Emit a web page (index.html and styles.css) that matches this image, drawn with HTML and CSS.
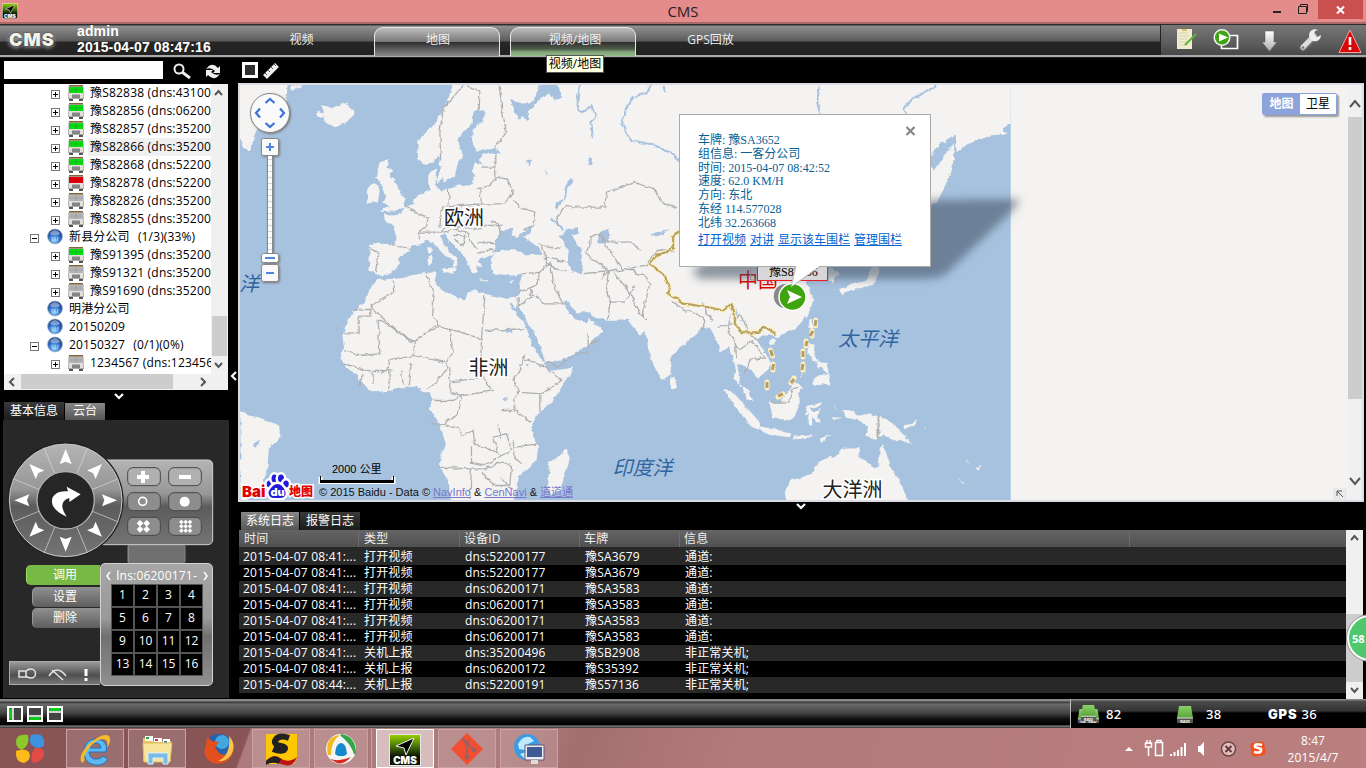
FILE: index.html
```html
<!DOCTYPE html>
<html lang="zh-CN">
<head>
<meta charset="utf-8">
<title>CMS</title>
<link rel="stylesheet" href="styles.css">
</head>
<body>
<svg class="defs" width="0" height="0" aria-hidden="true">
  <defs>
    <linearGradient id="metal" x1="0" y1="0" x2="0" y2="1"><stop offset="0" stop-color="#b4b4b4"/><stop offset=".4" stop-color="#979797"/><stop offset=".55" stop-color="#5c5c5c"/><stop offset="1" stop-color="#747474"/></linearGradient>
    <linearGradient id="silver" x1="0" y1="0" x2="0" y2="1"><stop offset="0" stop-color="#fff"/><stop offset="1" stop-color="#aaa"/></linearGradient>
    <linearGradient id="cmsg" x1="0" y1="0" x2="0" y2="1"><stop offset="0" stop-color="#9bd000"/><stop offset=".35" stop-color="#4a7d0a"/><stop offset=".7" stop-color="#0c1403"/></linearGradient>
    <linearGradient id="grn" x1="0" y1="0" x2="0" y2="1"><stop offset="0" stop-color="#8bd06a"/><stop offset="1" stop-color="#5aa53a"/></linearGradient>
    <radialGradient id="ball" cx=".45" cy=".75" r=".75"><stop offset="0" stop-color="#8fd4ff"/><stop offset=".5" stop-color="#2f6fc8"/><stop offset="1" stop-color="#12357c"/></radialGradient>
  </defs>
  <symbol id="bus" viewBox="0 0 16 16">
    <rect x="1" y="0" width="14" height="2" fill="#84603f"/><rect x="0" y="1.500" width="16" height="8" fill="#ccc"/>
    <rect x="1" y="2" width="14" height="6" fill="currentColor"/><path d="M0 8h16v6H0z" fill="#e2e1dc"/><path d="M0 8h1v5H0zM15 8h1v5h-1z" fill="#b8b8b8"/>
    <rect x="4" y="9.500" width="8" height="4" fill="#858585"/><rect x="0" y="13" width="16" height="1" fill="#aaa"/><path d="M1 14h4v2H1zM11 14h4v2h-4z" fill="#555"/>
    <path d="M8 2v6M1 5h14" stroke="#000" stroke-opacity=".1"/>
  </symbol>
  <symbol id="globe" viewBox="0 0 16 16">
    <circle cx="8" cy="8" r="7.500" fill="url(#ball)" stroke="#aeb7c4" stroke-width=".7"/>
    <path d="M5 8q0 3 1 5M11 8q0 3-1 5M8 8v5" stroke="#d8efff" stroke-opacity=".6" fill="none"/>
    <path d="M3 4.500q5-6 10 0-1 3-5 2-4 1-5-2z" fill="#fff" fill-opacity=".4"/>
  </symbol>
  <symbol id="cms" viewBox="0 0 32 32">
    <rect x=".5" y=".5" width="31" height="31" fill="url(#cmsg)" stroke="#e8e8e8"/><path d="M25 4 7 12l8 2 2 7z" fill="#000" stroke="#eee" stroke-width="1"/>
    <text x="16" y="30" text-anchor="middle" font-family="Inter" font-weight="900" font-size="10" fill="#fff">CMS</text>
  </symbol>
  <symbol id="disk" viewBox="0 0 18 19">
    <path d="M3 1h12l2 12H1z" fill="url(#grn)"/><rect x="1" y="13" width="16" height="5" fill="#555"/><path d="M1 13h16" stroke="#ddd"/><text x="9" y="17.500" text-anchor="middle" font-size="4" font-family="Inter" font-weight="700" fill="#fff">RAID</text>
  </symbol>
</svg>

<header class="titlebar">
  <svg class="app-icon" width="16" height="16"><use href="#cms"/></svg>
  <span class="title">CMS</span>
  <div class="winbtns">
    <svg width="50" height="20"><path d="M5 12h8" stroke="#222" stroke-width="2"/><path d="M30.500 6.500h8v7h-8zM32.500 6V4.500h7v7H38" fill="none" stroke="#222"/></svg>
    <span class="close"><svg width="10" height="10"><path d="M1 1.500 8 8.500M8 1.500 1 8.500" stroke="#fff" stroke-width="2"/></svg></span>
  </div>
</header>

<nav class="header">
  <div class="logo">CMS</div>
  <div class="user"><div>admin</div><div>2015-04-07 08:47:16</div></div>
  <div class="tabs"><span class="tab">视频</span><span class="tab on">地图</span><span class="tab on hover">视频/地图<em>视频/地图</em></span><span class="tab">GPS回放</span></div>
  <div class="tools">
    <svg width="205" height="32">
      <path d="M16 4h15v20H16z" fill="#f0ecd2"/><path d="M18 8h9M18 11h10M18 14h8M18 17h9M18 20h7" stroke="#d9d2a8"/><path d="M21 5h5" stroke="#d9aa4a" stroke-width="1.500"/><path d="m24 20 11-11" stroke="#59b82f" stroke-width="2"/>
      <path d="M60.500 10.500h16v13h-16z" fill="none" stroke="#fff" stroke-width="1.700"/><circle cx="61" cy="12.500" r="8.500" fill="#f3f3f3"/><circle cx="61" cy="12.500" r="7" fill="#42a317"/><path d="m58 8.500 9 4-9 4z" fill="#fff"/>
      <path d="M104 6h9v11h3l-7.500 9.500-7.500-9.500h3z" fill="url(#silver)" stroke="#555" stroke-width=".5"/>
      <path d="m142 23 11-11" stroke="#777" stroke-width="6.500" stroke-linecap="round"/><path d="m142 22 11-11" stroke="#ddd" stroke-width="5" stroke-linecap="round"/><path d="M157 5a6 6 0 1 0 3 5l-4 2-3-2 1-4z" fill="#eee"/><circle cx="142" cy="22.500" r="1.300" fill="#777"/>
      <path d="M189 5 200 27.500h-22z" fill="#d80808" stroke="#f4a3a3"/><path d="M189 12v8M189 22v3" stroke="#fff" stroke-width="2.600"/>
    </svg>
  </div>
</nav>

<main class="work">
  <aside class="side">
    <div class="search"><input class="field" aria-label="search">
      <svg width="60" height="22"><circle cx="10" cy="8" r="4.500" fill="none" stroke="#eee" stroke-width="2"/><path d="m13 11 8 6" stroke="#eee" stroke-width="3"/><path d="M37 8q6-8 12-1l2-2v7h-7l2-2q-4-4-9-2zM51 13q-6 8-12 1l-2 2v-7h7l-2 2q4 4 9 2z" fill="#eee"/></svg>
    </div>
    <div class="tree">
      <div class="tree-main">
        <ul class="rows">
          <li class="car g"><i></i><svg><use href="#bus"/></svg><span>豫S82838 (dns:43100</span></li>
          <li class="car g"><i></i><svg><use href="#bus"/></svg><span>豫S82856 (dns:06200</span></li>
          <li class="car g"><i></i><svg><use href="#bus"/></svg><span>豫S82857 (dns:35200</span></li>
          <li class="car g sel"><i></i><svg><use href="#bus"/></svg><span>豫S82866 (dns:35200</span></li>
          <li class="car g"><i></i><svg><use href="#bus"/></svg><span>豫S82868 (dns:52200</span></li>
          <li class="car r"><i></i><svg><use href="#bus"/></svg><span>豫S82878 (dns:52200</span></li>
          <li class="car"><i></i><svg><use href="#bus"/></svg><span>豫S82826 (dns:35200</span></li>
          <li class="car"><i></i><svg><use href="#bus"/></svg><span>豫S82855 (dns:35200</span></li>
          <li class="grp"><i class="open"></i><svg><use href="#globe"/></svg><span>新县分公司&nbsp; (1/3)(33%)</span></li>
          <li class="car g"><i></i><svg><use href="#bus"/></svg><span>豫S91395 (dns:35200</span></li>
          <li class="car"><i></i><svg><use href="#bus"/></svg><span>豫S91321 (dns:35200</span></li>
          <li class="car"><i></i><svg><use href="#bus"/></svg><span>豫S91690 (dns:35200</span></li>
          <li class="grp leaf"><i></i><svg><use href="#globe"/></svg><span>明港分公司</span></li>
          <li class="grp leaf"><i></i><svg><use href="#globe"/></svg><span>20150209</span></li>
          <li class="grp"><i class="open"></i><svg><use href="#globe"/></svg><span>20150327&nbsp; (0/1)(0%)</span></li>
          <li class="car"><i></i><svg><use href="#bus"/></svg><span>1234567 (dns:123456</span></li>
        </ul>
        <div class="vbar tree-v"><svg width="16" height="18"><path d="m4 11 3.500-4 3.500 4" class="arr"/></svg><b></b><svg width="16" height="18"><path d="m4 7 3.500 4 3.500-4" class="arr"/></svg></div>
      </div>
      <div class="hbar"><svg width="17" height="16"><path d="m10 4-4 4 4 4" class="arr"/></svg><b></b><svg width="50" height="16"><path d="m28 4 4 4-4 4" class="arr"/></svg></div>
    </div>
    <div class="fold side-fold"><svg width="12" height="12"><path d="m2 4 4 4 4-4" class="chev"/></svg></div>
    <div class="subtabs"><span class="on dark">基本信息</span><span class="lit">云台</span></div>
    <section class="ptz">
      <svg class="wheel" width="226" height="143" viewBox="9 60 678 429">
        <path d="M384 434h170v55H384z" fill="#707070"/><path d="M384 437v50M555 437v50" stroke="#bbb" stroke-width="2"/>
        <rect x="200" y="180" width="438" height="254" rx="14" fill="url(#metal)" stroke="#cfcfcf" stroke-width="3"/>
        <circle cx="197" cy="301" r="174" fill="#222"/><circle cx="197" cy="301" r="169" fill="url(#metal)" stroke="#c8c8c8" stroke-width="3"/>
        <g stroke="#ddd" stroke-width="2"><path d="m41 237 312 128M353 237 41 365M133 457l129-312M262 457 133 145"/></g>
        <circle cx="197" cy="301" r="86" fill="#262626" stroke="#b0b0b0" stroke-width="4"/>
        <g fill="#fff"><g id="ar"><path d="m197 147 18 45-18-7-18 7z"/></g><use href="#ar" transform="rotate(45 197 301)"/><use href="#ar" transform="rotate(90 197 301)"/><use href="#ar" transform="rotate(135 197 301)"/><use href="#ar" transform="rotate(180 197 301)"/><use href="#ar" transform="rotate(225 197 301)"/><use href="#ar" transform="rotate(270 197 301)"/><use href="#ar" transform="rotate(315 197 301)"/>
        <path d="M200 260l42 23-34 23v-12q-38 12-8 56-54-24-42-58 12-22 46-18z"/></g>
        <g fill="#8d8d8d" stroke="#484848" stroke-width="3"><g fill="#b0b0b0"><rect x="383" y="203" width="98" height="54" rx="16"/><rect x="506" y="203" width="98" height="54" rx="16"/></g><rect x="383" y="278" width="98" height="54" rx="16"/><rect x="506" y="278" width="98" height="54" rx="16"/><rect x="383" y="352" width="98" height="54" rx="16"/><rect x="506" y="352" width="98" height="54" rx="16"/></g>
        <g fill="none" stroke="#fff" stroke-width="12"><path d="M411 231h36M429 213v36M537 231h36"/></g><circle cx="428" cy="304" r="12" fill="none" stroke="#fff" stroke-width="5"/><circle cx="554" cy="305" r="15" fill="#fff"/>
        <g fill="#fff"><path d="M420 360l10 10-10 10-10-10zM440 360l10 10-10 10-10-10zM420 378l10 10-10 10-10-10zM440 378l10 10-10 10-10-10z"/>
        <path d="M544 360l6 6-6 6-6-6zM557 360l6 6-6 6-6-6zM570 360l6 6-6 6-6-6zM544 373l6 6-6 6-6-6zM557 373l6 6-6 6-6-6zM570 373l6 6-6 6-6-6zM544 386l6 6-6 6-6-6zM557 386l6 6-6 6-6-6zM570 386l6 6-6 6-6-6z" stroke="#fff" stroke-width="1.500"/></g>
      </svg>
      <div class="ptz-low">
        <div class="acts"><span class="act go">调用</span><span class="act">设置</span><span class="act">删除</span>
          <div class="aux"><svg width="90" height="24"><path d="M9 9h7v6H9zM16 9q2-2 5-2a4.500 4.500 0 1 1 0 9q-3 0-5-2M39 14q8-12 17 0M42 8l11 10" fill="none" stroke="#e4e4e4" stroke-width="1.500"/><path d="M76 7v7M76 16v3" stroke="#fff" stroke-width="3"/></svg></div></div>
        <div class="dev"><div class="dev-h"><svg width="5" height="10"><path d="M4 1 1 5l3 4" class="chev thin"/></svg><span>dns:06200171-</span><svg width="5" height="10"><path d="m1 1 3 4-3 4" class="chev thin"/></svg></div>
          <div class="keys"><b>1</b><b>2</b><b>3</b><b>4</b><b>5</b><b>6</b><b>7</b><b>8</b><b>9</b><b>10</b><b>11</b><b>12</b><b>13</b><b>14</b><b>15</b><b>16</b></div></div>
      </div>
    </section>
  </aside>
  <div class="split"><svg width="8" height="12"><path d="M6 2 2 6l4 4" class="chev"/></svg></div>

  <section class="content">
    <div class="maptools"><svg width="45" height="24"><path d="M5.500 5.500h13v13h-13z" fill="#2e2e2e" stroke="#fff" stroke-width="3"/><path d="m27 19 12-12" stroke="#eee" stroke-width="5.500"/><path d="m27 15 2 2M30 12l2 2M33 9l2 2M36 6l2 2" stroke="#555"/></svg></div>
    <div class="mapbox">
      <div class="map">
        <svg class="world" width="1108" height="415" viewBox="240 85 1108 415">
          <defs>
            <filter id="rough" x="0" y="0" width="100%" height="100%"><feTurbulence type="fractalNoise" baseFrequency=".16" numOctaves="3" seed="4"/><feDisplacementMap in="SourceGraphic" scale="4.500" xChannelSelector="R" yChannelSelector="G"/></filter>
            <filter id="soft" x="-10%" y="-30%" width="120%" height="160%"><feGaussianBlur stdDeviation="4"/></filter>
            <clipPath id="tile"><rect x="240" y="85" width="770.700" height="415"/></clipPath>
          </defs>
          <rect x="240" y="85" width="1108" height="415" fill="#f4f3f1"/>
          <g clip-path="url(#tile)"><rect x="240" y="85" width="771" height="415" fill="#a7c2df"/>
          <g filter="url(#rough)"><g transform="translate(236.500 80.500) scale(.33333)">
            <g fill="#f4f3f1">
              <path d="M660 -30L650 15 625 80 600 120 575 150 542 180 545 235 562 255 590 245 607 225 612 260 622 303 655 290 662 255 680 225 665 185 675 160 705 130 708 95 725 85 748 95 735 125 708 150 706 190 720 210 775 205 795 215 740 222 730 232 735 255 715 245 708 270 715 285 708 305 690 315 672 313 640 325 610 330 598 315 597 290 600 263 575 275 575 310 583 330 552 340 530 355 535 370 505 380 495 395 470 405 442 402 445 425 465 430 478 460 475 492 410 488 397 495 400 530 395 572 430 585 440 587 470 575 490 550 488 535 520 508 525 495 550 492 570 480 590 490 620 520 650 540 655 562 662 552 662 535 640 515 620 490 612 465 622 458 645 490 680 520 695 550 708 575 725 575 715 555 735 560 725 540 755 528 780 515 760 535 765 565 770 580 830 585 855 580 852 610 848 640 840 650 810 655 745 640 715 630 693 635 685 660 630 635 605 620 595 600 600 575 560 578 490 590 440 598 430 590 400 625 385 665 350 695 330 725 318 765 322 800 312 832 318 845 335 865 360 880 380 915 412 935 465 930 500 920 540 918 560 935 580 935 588 955 580 985 600 1015 612 1040 628 1090 612 1130 610 1160 635 1200 650 1290 820 1290 845 1215 845 1190 900 1140 905 1100 890 1070 885 1035 905 1000 950 960 1000 880 1010 862 935 872 925 850 885 790 870 740 840 690 822 668 836 688 845 675 870 720 900 770 928 845 975 840 1020 815 1060 790 1097 750 1070 725 1060 710 1050 725 1020 720 1000 700 980 665 990 660 1020 695 1060 695 1075 712 1115 718 1177 718 1185 735 1212 765 1227 750 1232 790 1242 835 1267 885 1279 898 1302 882 1305 825 1332 800 1382 760 1392 745 1422 745 1437 770 1452 815 1477 800 1487 825 1497 860 1492 895 1517 920 1532 955 1547 965 1537 935 1512 910 1507 885 1502 850 1532 860 1557 885 1567 892 1597 865 1604 845 1587 815 1562 785 1572 765 1602 765 1622 770 1682 740 1717 700 1730 660 1712 610 1692 560 1700 500 2060 420 2082 380 2107 355 2137 290 2152 235 2154 190 2122 225 2092 270 2072 240 2112 190 2150 165 2172 160 2167 180 2222 180 2262 165 2317 160 2297 150 2292 115 2340 105 2340 -30z"/>
              <path d="M2160 215q60-50 157-80l10-10-10-25 30 0-30-40-160 80z"/>
              <path d="M0 -10h155L150 60 120 80 65 95 62 150 40 215 20 200 0 160zM163 15l35 0-20 10-18 4z"/>
              <path d="M243 90l20 8-8-25 30 10 20-5 20-12 25 20 0 20-25 22-28 12-28-14-8-15-18-5z"/>
              <path d="M430 245l25-8-5 25 20 5-12 25 15 5 12 30 20 30-5 25-20 10-50 2 28-18-20-10 8-18-15-45-15-10z"/>
              <path d="M390 325l25-18 15 15-5 40-35 8 5-20-8-10z"/>
              <path d="M620 262l-2 30-12 15-8-10zM575 500l10 0 2 16-9 4zM573 530l14-8 2 25-14 6zM615 565l45-5-8 20-35-8zM728 596l28 4-2 3-24-3zM815 603l22-6-8 8z"/>
              <path d="M12 990l25 15 30 5 60 25 5 35-35 35-5 70-20 50-60 50z"/>
              <path d="M990 1105l10 30-15 50-15 45-25 10-15-20 10-50-5-25 35-20z"/>
              <path d="M1302 890l12 0 8 30-15 10z"/><path d="M1458 925l30 8 35 40 45 50 0 25-25-10-35-45z"/>
              <path d="M1564 1040l60 8 38 12-5 10-70-10zM1672 1065l60 0-30 12-30-4zM1750 1075l35-15-30 25z"/>
              <path d="M1600 965l30 0 25-30 20-30 25 15-15 15 5 30-15 45-25 10-40-10-8-25z"/>
              <path d="M1712 975l45-7-5 8-30 6 10 15 25-12-18 22 15 15-15 0-12-12 0 25-10-5-2-30-8 5z"/>
              <path d="M1595 780l20-5 2 12-15 10zM1722 715l8 10-5 30-13-15z"/><path d="M1717 790l17 2-2 30 15 15-15 5-20-25zM1735 840l35 10 10 35-15-10-10-15-10 5zM1730 895l30-15 20 5-3 30-30-5-15 5zM1690 890l20-22-18 24z"/>
              <path d="M1820 988l30 3 15 15 35-8 60 22 30 30 35 40-40-10-45-15-25 10-30-10 10-20-25-25-40-8z"/><path d="M1995 1035l35-5 10-15-5 20-30 8zM1785 1010l35 2-30 5zM1792 965l3 25-3-8zM2065 1035l8 12-6-5zM2190 1135l8 15-8-8zM2160 1190l25 20-8-4zM2215 1163l25-10-20 15z"/>
              <path d="M1650 1290l-5-60 20-30 60-20 15-30 40-25 15 5 20-25 55-2-5 25 50 35 10-5 5-55 10-12 25 75 25 35 20 50 32 50 10 30z"/>
              <path d="M1815 645l-5-18 35-17 40-5 10-20 15-35 20 20-10 25-10 18-35 10-20 0-20 8zM1780 560l27 20-20 30-15-25z"/>
            </g>
            <g fill="#a7c2df"><path d="M770 515L775 490 790 450 830 445 825 465 845 470 875 445 895 430 880 460 860 468 905 500 915 520 870 525 825 505 790 512z"/><path d="M970 470l25-25 30-5 5 20-25 5 30 40 2 75-30-5-15-30 5-35z"/><path d="M1085 465l35-20-10 20 5 20-28 5z"/><path d="M820 55l45 15 30-10 10-45 60-5 10 40-22 10-20-25-25 25-20 20-15 15 5 25-20-10-10 10-12-25-15-40z"/><path d="M955 390l3-25 25-10 0-35 10-20 20 0-20 20-5 30-25 30zM865 240l20-5-5 20zM928 260l6 22-6 0zM1060 225l8 12-5 15-10-4zM1240 465l60-20-20 15-30 10zM1092 455l25-10 0 30-25 5zM50 1090l25-15-12 18-10 8zM805 750l18-10 5 15-15 5zM800 955l10-10 0 20zM868 856l8-4-2 10zM1495 680l10 20-5 5zM1510 720l18 2-4 8z"/></g>
            <g fill="none" stroke="#a7c2df" stroke-width="6"><path d="M1030 15l-10 60 15 20 30-20 15 35-15 15 3 45M1240 -10l0 40-60 30-25 60 25 60 60 10 70 30 25 30M1750 15l-8 50 18 70M2080 -10l15 30-70 35-25 30 20 40M1280 20l10 15M945 410l35 40M822 668l35 50" /></g>
            <g fill="none" stroke="#b0afaf" stroke-width="3.800">
              <path d="M680 15l-60 70-10 70 2 60 0 25M690 15l40 20-2 50M788 15l10 80 12 60-35 45M635 325l4 50M730 330l5 40 70 0 25-35-20-40-30-5-20 25-35 10zM735 370l-120 10-5 60M830 360l20 20 45 15-5 40-30 15M505 380l40 20 30 10-5 30-20 10-2 30M470 492l50 12M400 505l25 10-8 60M552 455l60 0 20-20 90 10 25-10 50 0M620 455l30-10 40 10 15 30 15 20M650 465l35 0-5 30-30-20M725 485l50 5M720 515l50-8M765 420l20 10 8 35M775 220l0 80M735 260l40 0"/>
              <path d="M400 680L525 785 605 735 640 745 735 775 745 645M570 578l8 30 15 25-5 75 20 30M745 750l120-5M735 775l-2 70M400 677l75-45-5-32M355 687h45v20h-35v50h-45M435 720l-10 0 5 100-65 5-40-15M435 720l100 65-5 40-70 15-10 30-15 10M640 745l10 70-20 30M530 825l95 20 10 15-35 45-30 20M525 845l-10 70M460 870l0 55M495 870l5 45M640 860l0 75 40 10 95-15M640 905l100-15 30 45M865 825l-20 50-15 25 20 35M865 835l60 25 50 40-60 40-75-5M850 935l-15 15 0 40-40 0M835 990l50 35M590 960l60 0 25-15-10 55-50 35-35-10M625 1035l40 5 10 25 35-15 5 45 30 5 40 20-15-50 40-10 15 50-30 15-50 30-40-10 0-45M785 1035l10 40M610 1160l90 5 45 0 50-20 30 10-5 60-50 0-30-40M705 1165l-5 90M840 1100l60-10M830 1080l5 50 20 20M795 1195l40 40M910 1000l0-60M320 850l40 10 40 15M380 880l-15 40M465 870l-60 0 5 40"/>
              <path d="M855 580l55-5-10 40-55 20M910 575l30-30M940 545l15 80 25 45-55 0-45-40M845 650l0 25 40-25-10-30M915 500l20 50 30 20 30 5M905 490l45 15 25-5M925 530l60 15M1045 515l15-15 0-30 25-10 30 25 70 0 25 25M1040 580l75-10 75 0M1045 515l70 55-5 60 10 40-5 45M1115 665l50 0 30-50M965 440l-5-30 30-35 25 5 90 0 5-45 90-30M930 840l35 20 50-40 40 0 0-60M1060 790l30-10M1192 305l60 20 30 45 40 10M1092 455l10 30 55 80 70-10 40-50 50 10M1092 595l30-30 50 60 40 80 20 10M1175 555l30 30 15-5 20 30-25 100M1305 660l40 30 40 10M1385 700l20 20-10 30M1400 665l10 35 20 20M1445 740l45-10 20-30M1490 770l10 30 15 5 30-25 40 50-45 10-15 40M1605 965l50 0 15-40 15-5M1480 700l-5 50 20 30 5 50M1510 700l30 60 25 20"/>
              <path d="M1926 1007v65" stroke-width="6"/>
            </g>
            <path d="M1330 455l-20 10 0 40-50 20-20 25 40 30 20 40-5 20 50 30 70 10 45 10 25-20 10 35 0 25 20 25 50 0 20-15 35 20" fill="none" stroke="#fff0bd" stroke-width="12"/><path d="M1330 455l-20 10 0 40-50 20-20 25 40 30 20 40-5 20 50 30 70 10 45 10 25-20 10 35 0 25 20 25 50 0 20-15 35 20" fill="none" stroke="#b4a062" stroke-width="6"/>
          </g></g>
          <path d="M815.500 320v6M812 331v5M806 341v5M803 351v6M803 364v6M794 378l-3 5M783 394l-5 3M770.500 350l2 6M773 364v6M767 382v6" stroke="#ffeec0" stroke-width="5" stroke-linecap="round"/><path d="M816 320l-1 6M813 331l-3 5M807 341l-1 5M803 351v6M803 364l-1 6M794 379l-3 4M783 394l-5 2M770.500 350l2 6M773.500 364l-1 6M767 382v6" stroke="#b4a062" stroke-width="3"/>
          </g>
          <g class="land"><text x="444" y="225">欧洲</text><text x="468.500" y="375">非洲</text><text x="822.500" y="496.500">大洋洲</text></g>
          <g class="sea"><text x="239" y="290.500">洋</text><text x="838" y="346">太平洋</text><text x="612.500" y="475">印度洋</text></g>
          <text x="738" y="288" class="nation">中国</text>
          <path d="M692 272 730 240 930 200 1018 199Q1020 204 1010 213L948 272Q942 279 920 279H700z" fill="#3c4e60" fill-opacity=".56" filter="url(#soft)"/>
          <g><path d="M750.500 262v18h70" fill="none" stroke="#888"/><path d="M757.500 260.500h70v20h-70z" fill="#d7d7d9" stroke="#ed1c24"/><text x="769" y="276" class="plate">豫S82336</text></g>
          <circle cx="786" cy="296" r="13" fill="#888" stroke="#f3f3f3" stroke-width="1.500"/><circle cx="792.500" cy="297" r="13.500" fill="#3fa50e" stroke="#fff" stroke-width="1.500"/><path d="m787 290 15 7-15 7 3-7z" fill="#fff"/>
          <path d="M320.500 477v5h73v-5" fill="none" stroke="#fff" stroke-width="4"/><path d="M320.500 476v7M393.500 476v7" stroke="#000"/><path d="M320 481.500h74" stroke="#000" stroke-width="3"/><text x="332" y="473" class="scale">2000 公里</text>
          <g class="baidu"><text x="242" y="496.500" class="bai">Bai</text><g fill="#2319dc" stroke="#fff" stroke-width="5" paint-order="stroke"><ellipse cx="269.500" cy="484" rx="2.800" ry="3.500"/><ellipse cx="274.500" cy="478.500" rx="3" ry="4"/><ellipse cx="281" cy="478.500" rx="3" ry="4"/><ellipse cx="286" cy="484" rx="2.800" ry="3.500"/><path d="M277.500 484q5 0 8 8 1 6-6 6h-5q-6 0-6-6 4-8 9-8z"/></g><text x="270.500" y="495.500" class="du">du</text><text x="289" y="496" class="ditu">地图</text></g>
        </svg>
        <div class="copyright">© 2015 Baidu - Data © <a>NavInfo</a> &amp; <a>CenNavi</a> &amp; <a>道道通</a></div>
        <svg class="nav" width="44" height="194"><g filter="drop-shadow(1px 1px 1px #777)"><circle cx="22" cy="22" r="19.500" fill="#fafafa" stroke="#8a8a8a"/><path d="m17.500 12 4.500-4 4.500 4M17.500 32l4.500 4 4.500-4M12 17.500 8 22l4 4.500M32 17.500l4 4.500-4 4.500" fill="none" stroke="#3d72d7" stroke-width="2.200"/><path d="M19.500 64.500h5v104h-5z" fill="#fff" stroke="#888"/><rect x="13.500" y="47.500" width="17" height="17" rx="2" fill="#fafafa" stroke="#888"/><rect x="13.500" y="162.500" width="17" height="9" rx="2" fill="#fff" stroke="#888"/><rect x="13.500" y="173.500" width="17" height="17" rx="2" fill="#fafafa" stroke="#888"/></g><path d="M22 68v94" stroke="#d5d5d5" stroke-width="4" stroke-dasharray="1 5"/><path d="M18 56h8M22 52v8M17 167h10M18 182h8" stroke="#4e86dd" stroke-width="2"/></svg>
        <div class="maptype"><b>地图</b><span>卫星</span></div>
        <article class="info"><svg class="x" width="12" height="12"><path d="m1.500 2 8 8M9.500 2l-8 8" stroke="#858585" stroke-width="2.200"/></svg>
          <p>车牌: 豫SA3652</p><p>组信息: 一客分公司</p><p>时间: 2015-04-07 08:42:52</p><p>速度: 62.0 KM/H</p><p>方向: 东北</p><p>东经 114.577028</p><p>北纬 32.263668</p>
          <div class="links"><a>打开视频</a> <a>对讲</a> <a>显示该车围栏</a> <a>管理围栏</a></div>
          <svg class="tail" width="32" height="24"><path d="M6 0 1 22 31 0z" fill="#fff"/><path d="M6 1 1 22 31 1" fill="none" stroke="#aaa" stroke-width=".8"/></svg>
        </article>
        <svg class="corner" width="14" height="12"><rect width="14" height="12" fill="#e9e9e9"/><path d="M4 8V3h5M4 3l6 6" fill="none" stroke="#555"/></svg>
      </div>
      <div class="vbar map-v"><svg width="14" height="32"><path d="m2 22 5-6 5 6" class="arr"/></svg><b></b><svg width="14" height="32"><path d="m2 10 5 6 5-6" class="arr"/></svg></div>
    </div>
    <div class="fold log"><svg width="12" height="10"><path d="m2 2 4 4 4-4" class="chev"/></svg></div>
    <div class="subtabs logs"><span class="lit">系统日志</span><span class="dark">报警日志</span></div>
    <div class="table">
      <div class="grid">
        <div class="tr th"><span>时间</span><span>类型</span><span>设备ID</span><span>车牌</span><span>信息</span><span></span></div>
        <div class="tr first"><span>2015-04-07 08:41:...</span><span>打开视频</span><span>dns:52200177</span><span>豫SA3679</span><span>通道:</span></div>
        <div class="tr"><span>2015-04-07 08:41:...</span><span>打开视频</span><span>dns:52200177</span><span>豫SA3679</span><span>通道:</span></div>
        <div class="tr"><span>2015-04-07 08:41:...</span><span>打开视频</span><span>dns:06200171</span><span>豫SA3583</span><span>通道:</span></div>
        <div class="tr"><span>2015-04-07 08:41:...</span><span>打开视频</span><span>dns:06200171</span><span>豫SA3583</span><span>通道:</span></div>
        <div class="tr"><span>2015-04-07 08:41:...</span><span>打开视频</span><span>dns:06200171</span><span>豫SA3583</span><span>通道:</span></div>
        <div class="tr"><span>2015-04-07 08:41:...</span><span>打开视频</span><span>dns:06200171</span><span>豫SA3583</span><span>通道:</span></div>
        <div class="tr"><span>2015-04-07 08:41:...</span><span>关机上报</span><span>dns:35200496</span><span>豫SB2908</span><span>非正常关机;</span></div>
        <div class="tr"><span>2015-04-07 08:41:...</span><span>关机上报</span><span>dns:06200172</span><span>豫S35392</span><span>非正常关机;</span></div>
        <div class="tr"><span>2015-04-07 08:44:...</span><span>关机上报</span><span>dns:52200191</span><span>豫S57136</span><span>非正常关机;</span></div>
      </div>
      <div class="vbar log-v"><svg width="17" height="17"><path d="m5 10 3.500-4 3.500 4" class="arr"/></svg><b></b><svg width="17" height="17"><path d="m5 6 3.500 4 3.500-4" class="arr"/></svg></div>
    </div>
  </section>
  <div class="badge">58</div>
</main>

<footer class="status">
  <svg width="64" height="20"><g fill="#444" stroke="#fff" stroke-width="2"><path d="M8 3h14v14H8zM28 3h14v14H28zM48 3h14v14H48z"/></g><path d="M13 3v14M28 12h14M48 8h14" stroke="#fff" stroke-width="1.500"/><path d="M10.500 4.500v11M29.500 14.500h11M49.500 5.500h11" stroke="#0bcc1a" stroke-width="3"/></svg>
  <div class="counts"><svg width="24" height="20"><use href="#disk" x="0" y="4" width="15" height="16"/><use href="#disk" x="8" y="4" width="15" height="16"/><use href="#disk" x="3" y="0" width="17" height="18"/></svg><span class="c1">82</span><svg width="20" height="20"><use href="#disk" x="0" y="1" width="18" height="19"/></svg><span class="c2">38</span><b>GPS</b><span>36</span></div>
</footer>

<footer class="taskbar">
  <span class="start"><svg width="34" height="34"><path d="M15 4Q3 2 3 11q0 6 6 8 8-5 6-15z" fill="#8cc929"/><path d="M18 4q-3 8 2 11 5 4 11 0Q33 0 18 4z" fill="#3d91df"/><path d="M3 20q-1 11 8 12 8-3 5-11-4-4-13-1z" fill="#ffbb18"/><path d="M22 17q10-1 9 7-3 8-11 8-4-7 2-15z" fill="#e34b46"/></svg></span>
  <span class="tb"><svg width="34" height="34"><path d="M28 20H11q1 8 8 7 4 0 6-3l5 3q-4 7-13 6Q5 31 6 18 8 7 18 7q13 1 10 13zM12 16h11q-1-5-5-5t-6 5" fill="#5db9f4" stroke="#1e74be"/><path d="M4 31Q-1 24 11 12 25 0 31 4q3 4-2 12 1-6-1-8Q22 4 12 15 4 25 7 28z" fill="#f8bb28"/></svg></span>
  <span class="tb"><svg width="34" height="34"><path d="M3 6h9l2 3h17v20H3z" fill="#e9c66a"/><path d="M5 4h8v5H5zM14 6h8v4h-8zM23 7h7v4h-7z" fill="#fff"/><path d="M6 5h3v2H6z" fill="#2aa84a"/><path d="M15 7h3v2h-3z" fill="#d33"/><path d="M24 9h3v2h-3z" fill="#38b"/><path d="M3 11h29l-2 19H4z" fill="#f9e49c" stroke="#dfbc5c"/><path d="M8 32V21h20v11h-5v-6h-10v6z" fill="#79bae7" stroke="#d5f2ff"/></svg></span>
  <span class="tb plain"><svg width="34" height="34"><circle cx="17" cy="17" r="14" fill="#2861b0"/><circle cx="20" cy="11" r="7" fill="#43a8df"/><path d="M5 6l5 4 7 1-4 5 4 6q8 5 11-5l-1-10q8 8 3 17-6 11-19 8Q-1 27 4 13z" fill="#e4501b"/><path d="M27 5q8 9 2 19-5 7-13 6 13-5 11-25z" fill="#fbc54b"/></svg></span>
  <span class="tb"><svg width="34" height="34"><path d="M2 2h31v24l-3 6H2z" fill="#fdc803"/><path d="M25 6Q14 2 11 9q-1 4 6 5 6 1 3 4-4 2-11-1" fill="none" stroke="#222" stroke-width="6"/><path d="M2 29q8-8 14-3 8 6 17-1-4 12-16 7Q8 27 2 33z" fill="#c01313"/><path d="M2 29q8-8 15-2l-2 5Q8 29 2 33z" fill="#222"/></svg></span>
  <span class="tb stack"><svg width="34" height="34"><circle cx="17" cy="17" r="15" fill="#f4f4f4"/><path d="M4 23Q0 5 16 3q-9 6-9 20z" fill="#f2bb19"/><path d="M17 3q14 2 14 19-4-12-14-19z" stroke="#35a747" fill="#35a747" stroke-width="2"/><path d="M6 27q10 3 21-2-7 8-14 6z" fill="#d9281c"/><path d="M11 22q1-11 6-11t6 11l-3 2h-6z" fill="#1689ce"/></svg></span>
  <span class="tb active"><svg width="32" height="32"><use href="#cms"/></svg></span>
  <span class="tb"><svg width="34" height="34"><path d="m17 1 16 16-16 16L1 17z" fill="#f14e32"/><path d="m12 6 5 5v15M17 11l7 7" stroke="#9f6060" stroke-width="2" fill="none"/><g fill="#9f6060"><circle cx="17" cy="11" r="2.500"/><circle cx="24" cy="18" r="2.500"/><circle cx="17" cy="25" r="2.500"/></g></svg></span>
  <span class="tb"><svg width="34" height="34"><circle cx="15" cy="15" r="13" fill="#3c9be0"/><path d="M6 12q5-9 12-7l4 4-6 3-3 6-6-1zM8 22l6-2 2 6-3 1z" fill="#bceaff"/><path d="M13 13h19v15H13z" fill="#e9eef5" stroke="#657"/><path d="M15 15h15v10H15z" fill="#405b93"/><path d="M19 28h7v4h-7z" fill="#ddd"/></svg></span>
  <div class="tray"><svg width="150" height="34"><path d="m2 19 4-4 4 4z" fill="#fff"/><g stroke="#fff" fill="none"><path d="M32.500 10.500h7v13h-7zM34 10V8.500h4V10" stroke-width="1.500"/><path d="M22.500 11h6v4h-6zM24 8v4M27 8v4M25.500 15v9" stroke-width="1.500"/></g><path d="M48 24v-2M51.500 24v-4M55 24v-6M58.500 24v-9M62 24V11" stroke="#fff" stroke-width="2"/><path d="M75 14h2l4-4v14l-4-4h-2z" fill="#fff"/><circle cx="105.500" cy="17" r="7" fill="#e5bcbc" stroke="#6b4747" stroke-width="1.500"/><path d="m102.500 14 6 6M108.500 14l-6 6" stroke="#5d3939" stroke-width="2"/><rect x="128" y="10" width="14" height="14" rx="3" transform="rotate(-9 135 17)" fill="#f4511e"/><path d="M139 13q-8-2-7 2l6 2q1 5-7 3" stroke="#fff" stroke-width="2.500" fill="none"/></svg>
  <div class="clock"><div>8:47</div><div>2015/4/7</div></div></div>
</footer>
</body>
</html>
```
FILE: styles.css
```css
* { box-sizing: border-box; }
body { margin: 0; width: 1366px; height: 768px; overflow: hidden; background: #000; color: #fff; font: 12px/16px "Open Sans", "Noto Sans CJK SC", sans-serif; display: flex; flex-direction: column; }
svg { display: block; flex: none; }
.defs { position: absolute; }
.arr { fill: none; stroke: #555; stroke-width: 2; }
.chev { fill: none; stroke: #fff; stroke-width: 2.200; }
.chev.thin { stroke-width: 1.500; }

.titlebar { height: 24px; flex: none; display: grid; grid-template-columns: 120px 1fr 120px; background: #e48b8b; border-bottom: 2px solid #a96a6a; color: #2b2020; }
.app-icon { margin: 3px 0 0 2px; }
.title { text-align: center; font-size: 15px; line-height: 23px; }
.winbtns { display: flex; justify-content: flex-end; margin-right: 3px; }
.close { width: 45px; height: 19px; background: #c9504f; display: flex; align-items: center; justify-content: center; }

.header { height: 34px; flex: none; display: flex; background: linear-gradient(#2c2c2c 0 1px, #909090 2px, #5a5a5a 17px, #262626 18px, #222 31px, #aaa 31px, #aaa 33px, #222 33px); }
.logo { width: 77px; padding-left: 9px; font: 900 18px/31px Inter, sans-serif; letter-spacing: 1px; text-shadow: 0 0 3px #000, 0 1px 4px #fff; color: #f2f2e8; }
.user { width: 160px; font: bold 14px/16px "Liberation Sans", sans-serif; letter-spacing: .12px; margin-top: -1px; white-space: nowrap; }
.tabs { display: flex; gap: 10px; padding-top: 3px; flex: 1; }
.tab { width: 127px; height: 28px; text-align: center; line-height: 26px; color: #eee; padding-left: 2px; }
.tab.on { width: 126px; height: 29px; border: 1px solid #e5e5e5; border-bottom: 0; border-radius: 9px 9px 0 0; line-height: 24px; background: linear-gradient(#bdbdbd, #777 14px, #2d2d2d 14px, #8a8a8a); }
.tab.hover { background: linear-gradient(#bdbdbd, #777 14px, #2d2d2d 14px, #4c5c4a 21px, #82a57b 24px, #92bd88); display: flex; flex-direction: column; align-items: center; padding-left: 4px; }
.tab em { position: relative; z-index: 5; flex: none; font-style: normal; line-height: 16px; margin-top: 3px; padding: 0 2px; height: 18px; background: #ffffe1; color: #000; border: 1px solid #555; white-space: nowrap; }
.tools { width: 206px; height: 30px; margin-top: 1px; background: linear-gradient(#777, #606060 16px, #484848); border-left: 1px solid #222; }

.work { height: 641px; flex: none; display: flex; position: relative; overflow: hidden; }
.side { width: 230px; display: flex; flex-direction: column; }
.search { height: 26px; padding: 3px 0 0 4px; display: flex; gap: 6px; }
.field { width: 159px; height: 18px; border: 0; background: #fff; padding: 0; }
.tree { width: 224px; height: 306px; margin-left: 4px; background: #fff; color: #000; flex: none; }
.tree-main { display: flex; height: 290px; }
.rows { list-style: none; margin: 0; padding: 0; width: 207px; overflow: hidden; }
.rows li { display: flex; height: 18px; line-height: 17px; white-space: nowrap; }
.rows svg { width: 16px; height: 16px; margin: 1px 6px 0 8px; color: #b5b5b5; }
.rows i { flex: none; width: 9px; height: 9px; margin: 6px 0 0 47px; border: 1px solid #777; background: linear-gradient(#000, #000) center/5px 1px no-repeat, linear-gradient(#000, #000) center/1px 5px no-repeat; }
.rows i.open { background: linear-gradient(#000, #000) center/5px 1px no-repeat; }
.rows .grp i { margin-left: 26px; }
.rows .grp svg { height: 17px; margin-top: 0; }
.rows .grp span { letter-spacing: .15px; word-spacing: .8px; }
.rows .leaf i { visibility: hidden; }
.rows .g svg { color: #09db16; }
.rows .r svg { color: #e1000a; }
.rows .car span { width: 121px; letter-spacing: .2px; }
.rows .sel span { background: #f0f0f0; box-shadow: -2px 0 #f0f0f0; }
.vbar { background: #f0f0f0; display: flex; flex-direction: column; }
.vbar b { background: #cdcdcd; }
.tree-v { width: 17px; }
.tree-v b { height: 40px; width: 15px; margin-top: auto; margin-left: 1px; }
.hbar { display: flex; height: 16px; background: #f0f0f0; }
.hbar b { width: 152px; height: 15px; background: #cdcdcd; }
.fold { height: 12px; display: flex; justify-content: center; }
.side-fold { padding-left: 8px; }
.subtabs { display: flex; gap: 1px; height: 18px; margin-left: 4px; line-height: 17px; }
.subtabs .on { width: 60px; }
.lit { background: linear-gradient(#888, #555); }
.dark { background: linear-gradient(#3a3a3a, #1b1b1b); }
.side .subtabs span { text-align: center; }
.side .lit { width: 40px; height: 17px; margin-top: 1px; line-height: 15px; }
.ptz { margin-left: 3px; width: 226px; height: 278px; background: #282828; }
.ptz-low { display: flex; }
.acts { width: 97px; padding-top: 2px; display: flex; flex-direction: column; align-items: flex-end; }
.act { width: 68px; height: 20px; line-height: 19px; margin-bottom: 1.500px; padding-left: 20px; border-radius: 5px 0 0 5px; border-left: 1px solid #999; background: linear-gradient(#909090, #5e5e5e); }
.act.go { width: 74px; padding-left: 26px; background: #78b943; border-color: #9ee269; }
.aux { width: 91px; height: 24px; margin-top: 31px; background: linear-gradient(#999, #505050 60%, #777); border: 1px solid #aaa; border-right: 0; }
.dev { width: 113px; height: 123px; border: 1px solid #d3d3d3; border-radius: 5px; background: linear-gradient(#a6a6a6, #999 45%, #707070 60%, #909090); padding: 4px 4px 0 5px; }
.dev-h { display: flex; align-items: center; gap: 6px; height: 16px; }
.dev-h span { width: 81px; display: flex; justify-content: flex-end; overflow: hidden; white-space: nowrap; line-height: 14px; letter-spacing: .2px; }
.keys { display: grid; grid-template-columns: repeat(4, 21px); grid-auto-rows: 21px; gap: 2px; background: #555; padding: 1px; margin: 0 0 0 5px; width: 92px; }
.keys b { background: #000; font-weight: 400; text-align: center; line-height: 20px; }
.split { width: 8px; padding-top: 312px; }

.content { width: 1128px; display: flex; flex-direction: column; }
.maptools { height: 25px; }
.mapbox { width: 1126px; height: 419px; flex: none; border: 2px solid #dcdce4; display: flex; background: #f4f3f1; }
.map { width: 1108px; height: 415px; position: relative; }
.land text, .sea text, .nation { font: 20px "Noto Sans CJK SC", sans-serif; fill: #222; stroke: #fff; stroke-width: 3px; paint-order: stroke; }
.sea text { fill: #30649f; stroke: none; font-style: italic; }
.nation { fill: #e60000; stroke: none; }
.plate { font: 12px "Liberation Serif", "Noto Sans CJK SC", serif; }
.scale { font: 11px "Liberation Sans", "Noto Sans CJK SC", sans-serif; }
.baidu text { stroke: #fff; stroke-width: 3px; paint-order: stroke; }
.bai { font: 900 15px Inter, sans-serif; fill: #e50000; }
.baidu .du { font: 900 11px Inter, sans-serif; fill: #fff; stroke: none; }
.ditu { font: 900 12px "Noto Sans CJK SC", sans-serif; fill: #e50000; }
.copyright { position: absolute; left: 79px; bottom: 1px; font: 11px/14px "Liberation Sans", "Noto Sans CJK SC", sans-serif; color: #111; white-space: nowrap; }
.copyright a { color: #7777cc; text-decoration: underline; }
.nav { position: absolute; left: 8px; top: 6px; }
.maptype { position: absolute; left: 1022px; top: 8px; display: flex; height: 22px; width: 75px; border: 1px solid #8ba4dc; border-radius: 2px; box-shadow: 2px 2px 2px #999; background: #fff; color: #000; text-align: center; line-height: 19px; }
.maptype b { width: 37px; background: #8ba4dc; color: #fff; }
.maptype span { flex: 1; }
.info { position: absolute; left: 439px; top: 29px; width: 252px; height: 153px; background: #fff; border: 1px solid #ababab; color: #066196; padding: 19px 0 0 18px; font: 12px/13.800px "Liberation Serif", "Noto Sans CJK SC", serif; }
.info p { margin: 0; }
.info a { color: #0065d0; text-decoration: underline; }
.links { margin-top: 1px; line-height: 17px; white-space: nowrap; word-spacing: 1px; }
.x { position: absolute; right: 13px; top: 10px; }
.tail { position: absolute; left: 110px; top: 150px; }
.corner { position: absolute; right: 1px; bottom: 0; }
.map-v { width: 14px; }
.map-v b { height: 282px; margin-bottom: auto; }
.fold.log { height: 10px; padding-right: 2px; }
.subtabs.logs { margin-left: 3px; }
.logs span { padding: 0 5px; width: 58px; white-space: nowrap; }
.logs span + span { width: 60px; padding: 0 6px; }
.table { display: flex; width: 1126px; height: 169px; }
.grid { width: 1107px; margin-left: 1px; }
.tr { display: grid; grid-template-columns: 120px 101px 120px 100px 450px 1fr; height: 16px; line-height: 16px; }
.tr span { padding-left: 5px; white-space: nowrap; letter-spacing: .17px; }
.tr span:first-child { padding-left: 4px; letter-spacing: .22px; }
.th { height: 17px; background: linear-gradient(#646464, #505050); color: #eee; line-height: 17px; }
.th span { border-right: 1px solid #6c6c6c; padding-left: 4px; }
.th span:first-child { padding-left: 5px; }
.th span:nth-child(2) { padding-left: 5px; }
.th span:last-child { border: 0; }
.first { height: 18px; line-height: 19px; }
.tr:nth-child(even) { background: #282828; }
.log-v { width: 17px; }
.log-v b { height: 68px; margin-top: auto; }
.badge { position: absolute; left: 1347px; top: 557px; width: 46px; height: 46px; border-radius: 50%; border: 2px solid #fff; outline: 1px solid #999; background: #4ec86a; font-weight: 700; font-size: 11px; line-height: 43px; padding-left: 3px; }

.status { height: 29px; flex: none; display: flex; justify-content: space-between; background: linear-gradient(#888 0 2px, #333 3px, #6a6a6a 5px, #444 14px, #101010 20px, #000 26px, #999 27px, #444 28px); }
.status > svg { margin-top: 5px; }
.counts { width: 296px; border-left: 1px solid #bbb; background: linear-gradient(#888 0 1px, #4c4c4c 2px, #333 12px, #000 14px); display: flex; align-items: center; padding-left: 6px; font: 500 13px/16px "Noto Sans", sans-serif; }
.counts span { letter-spacing: .4px; }
.c1 { width: 75px; padding-left: 5px; }
.c2 { width: 72px; padding-left: 10px; }
.counts b { font: 900 13px Inter, sans-serif; letter-spacing: .8px; margin-right: 4px; }
.taskbar { height: 40px; flex: none; display: flex; background: linear-gradient(110deg, #895456 0 235px, #ae7b7c 237px 480px, #a46e70 550px, #b37a7b 700px, #bb8080 1366px); }
.start { width: 66px; padding: 3px 0 0 13px; }
.tb { width: 58px; height: 39px; margin: 1px 4px 0 0; border: 1px solid #c9a3a3; background: rgba(255, 255, 255, .15); display: flex; justify-content: center; padding-top: 2px; }
.tb.plain { border: 0; background: none; }
.tb.stack { width: 54px; margin-right: 8px; box-shadow: 3px 0 #a87878, 4px 0 #c9a3a3; }
.tb.active { background: rgba(255, 255, 255, .5); border-color: #fff; padding-top: 4px; }
.tray { margin-left: auto; display: flex; gap: 6px; width: 243px; padding-top: 4px; }
.clock { text-align: center; line-height: 17px; width: 68px; letter-spacing: .1px; }
```
